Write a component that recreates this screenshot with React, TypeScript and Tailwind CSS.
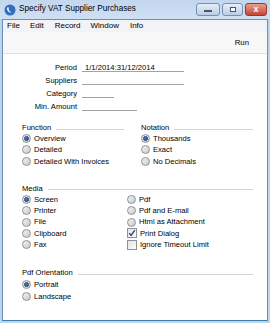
import React from 'react';

const Radio = ({ checked, label }: { checked?: boolean; label: string }) => (
  <div className="flex items-center gap-[3px] h-[11.3px]">
    <span className="w-[9px] h-[9px] rounded-full border border-[#8d9296] bg-gradient-to-br from-[#f2f2f2] to-[#cbcbcb] flex items-center justify-center shrink-0">
      {checked && <span className="w-[5px] h-[5px] rounded-full bg-gradient-to-br from-[#5d93d6] to-[#1d4f91] border-[0.5px] border-[#173f74]" />}
    </span>
    <span>{label}</span>
  </div>
);

const Check = ({ checked, label }: { checked?: boolean; label: string }) => (
  <div className="flex items-center gap-[3px] h-[11.3px]">
    <span className="w-[10px] h-[10px] border border-[#8d9296] bg-gradient-to-br from-[#e4e4e4] to-[#fbfbfb] flex items-center justify-center shrink-0">
      {checked && (
        <svg width="8" height="8" viewBox="0 0 8 8">
          <path d="M1.2 4.2 L3.1 6.4 L6.8 1.2" fill="none" stroke="#22427a" strokeWidth="1.3" />
        </svg>
      )}
    </span>
    <span>{label}</span>
  </div>
);

const Header = ({ title }: { title: string }) => (
  <div className="flex items-center gap-[5px] h-[11px]">
    <span>{title}</span>
    <div className="flex-1 h-px bg-[#cfd6dc] mt-[3px]" />
  </div>
);

const Field = ({ label, value, width }: { label: string; value?: string; width: string }) => (
  <div className="flex items-center h-[13px]">
    <span className="w-[79px] text-right pr-[5px]">{label}</span>
    <div className={`${width} h-[9px] border-b border-[#9da3a8] pl-[3px] leading-[9px]`}>{value}</div>
  </div>
);

export default function App() {
  return (
    <div
      className="w-[270px] h-[323px] flex flex-col bg-[#bcd4ee] text-black overflow-hidden"
      style={{ fontFamily: '"Liberation Sans", Arial, sans-serif' }}
    >
      {/* title bar */}
      <div className="h-[19px] flex items-center bg-gradient-to-b from-[#c2d6ee] to-[#cfe0f3] pl-[4px] pr-[3px] shrink-0">
        <svg width="12" height="12" viewBox="0 0 12 12" className="shrink-0">
          <circle cx="6" cy="6" r="5.5" fill="#2f6fc0" />
          <path d="M3.2 3.5 C2.6 6.5 4.6 9 7.8 8.4 C5.6 7.8 4.4 6 4.6 3.2 Z" fill="#ffffff" />
        </svg>
        <span className="ml-[3px] text-[8.2px] text-black">Specify VAT Supplier Purchases</span>
        <div className="ml-auto flex items-center gap-[2px]">
          <div className="w-[24px] h-[13px] rounded-[3px] border border-[#7590b3] bg-gradient-to-b from-[#e6eef8] to-[#b9cde6] flex items-center justify-center">
            <span className="w-[8px] h-[2px] bg-white border-[0.5px] border-[#44556b] mt-[3px]" />
          </div>
          <div className="w-[21px] h-[13px] rounded-[3px] border border-[#7590b3] bg-gradient-to-b from-[#e6eef8] to-[#b9cde6] flex items-center justify-center">
            <span className="w-[6px] h-[5px] border border-[#44556b] bg-white" />
          </div>
          <div className="w-[22px] h-[13px] rounded-[3px] border border-[#8e3b34] bg-gradient-to-b from-[#e8a08f] to-[#c4412f] flex items-center justify-center">
            <span className="text-white text-[9px] font-bold leading-none">x</span>
          </div>
        </div>
      </div>

      {/* client area */}
      <div className="flex-1 mx-[2px] mb-[2px] border border-[#6c8fb8] border-b-[#3f7fa6] bg-white flex flex-col">
        <div className="h-[12px] flex items-center gap-[10px] pl-[4px] text-[8px] bg-[#f1f3f6] shrink-0">
          <span>File</span>
          <span>Edit</span>
          <span className="ml-[1px]">Record</span>
          <span>Window</span>
          <span className="ml-[1px]">Info</span>
        </div>
        <div className="h-[22px] flex items-center justify-end pr-[18px] text-[7.8px] bg-[#f8f8f8] border-b border-[#e2e2e2] shrink-0">
          <span>Run</span>
        </div>

        <div className="flex-1 flex flex-col text-[7.6px] pt-[7px]">
          <Field label="Period" value="1/1/2014:31/12/2014" width="w-[102px]" />
          <Field label="Suppliers" width="w-[102px]" />
          <Field label="Category" width="w-[32px]" />
          <Field label="Min. Amount" width="w-[55px]" />

          <div className="flex pl-[19px] pr-[14px] mt-[9px]">
            <div className="w-[102px] flex flex-col">
              <Header title="Function" />
              <Radio checked label="Overview" />
              <Radio label="Detailed" />
              <Radio label="Detailed With Invoices" />
            </div>
            <div className="ml-[17px] flex-1 flex flex-col">
              <Header title="Notation" />
              <Radio checked label="Thousands" />
              <Radio label="Exact" />
              <Radio label="No Decimals" />
            </div>
          </div>

          <div className="flex flex-col pl-[19px] pr-[14px] mt-[16px]">
            <Header title="Media" />
            <div className="flex">
              <div className="w-[105px] flex flex-col">
                <Radio checked label="Screen" />
                <Radio label="Printer" />
                <Radio label="File" />
                <Radio label="Clipboard" />
                <Radio label="Fax" />
              </div>
              <div className="flex flex-col">
                <Radio label="Pdf" />
                <Radio label="Pdf and E-mail" />
                <Radio label="Html as Attachment" />
                <Check checked label="Print Dialog" />
                <Check label="Ignore Timeout Limit" />
              </div>
            </div>
          </div>

          <div className="flex flex-col pl-[19px] pr-[14px] mt-[17px]">
            <Header title="Pdf Orientation" />
            <div className="flex flex-col [&>div]:h-[12px]">
              <Radio checked label="Portrait" />
              <Radio label="Landscape" />
            </div>
          </div>
        </div>
      </div>
    </div>
  );
}
